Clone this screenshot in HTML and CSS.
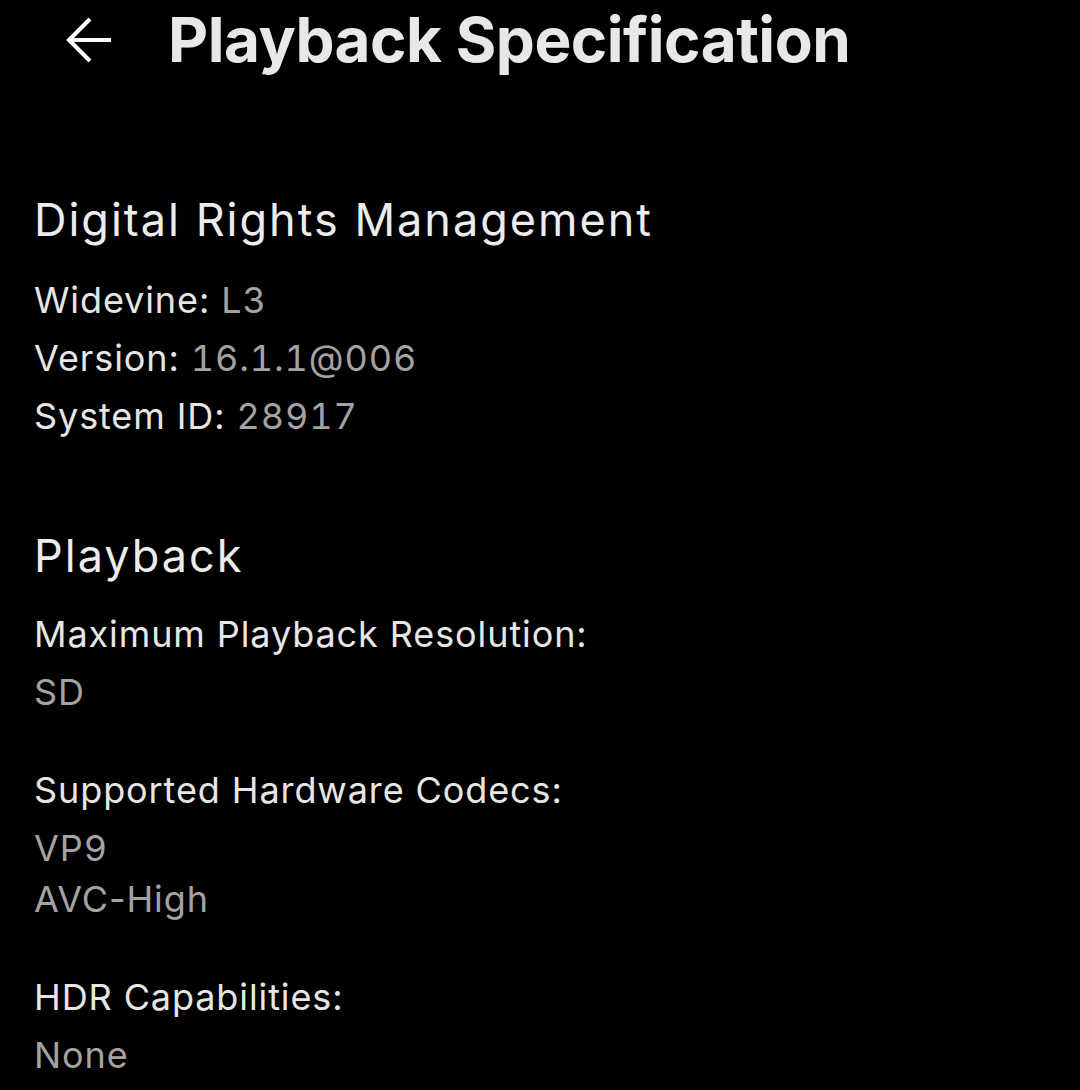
FILE: index.html
```html
<!DOCTYPE html>
<html>
<head>
<meta charset="utf-8">
<link rel="stylesheet" href="styles.css">
</head>
<body>
<header class="topbar">
  <svg class="back" width="48" height="48" viewBox="0 0 48 48" aria-hidden="true">
    <path d="M45 24H4M24 3L3 24L24 45" fill="none" stroke="#fff" stroke-width="4" stroke-linecap="butt" stroke-linejoin="miter"/>
  </svg>
  <h1 class="title">Playback Specification</h1>
</header>
<main class="content">
  <section class="section">
    <h2 class="heading">Digital Rights Management</h2>
    <div class="rows">
      <p class="row"><span class="label">Widevine:</span> <span class="value num">L3</span></p>
      <p class="row"><span class="label">Version:</span> <span class="value num">16.1.1@006</span></p>
      <p class="row"><span class="label">System ID:</span> <span class="value num">28917</span></p>
    </div>
  </section>
  <section class="section">
    <h2 class="heading">Playback</h2>
    <div class="groups">
      <div class="group">
        <p class="label block">Maximum Playback Resolution:</p>
        <div class="values">
          <p class="value block">SD</p>
        </div>
      </div>
      <div class="group">
        <p class="label block">Supported Hardware Codecs:</p>
        <div class="values">
          <p class="value block num">VP9</p>
          <p class="value block">AVC-High</p>
        </div>
      </div>
      <div class="group">
        <p class="label block">HDR Capabilities:</p>
        <div class="values">
          <p class="value block">None</p>
        </div>
      </div>
    </div>
  </section>
</main>
</body>
</html>
```
FILE: styles.css
```css
html, body {
  margin: 0;
  padding: 0;
  background: #000;
}
body {
  font-family: Inter, "Noto Sans", sans-serif;
  color: #e6e6e6;
  width: 1080px;
  height: 1090px;
  overflow: hidden;
}
p, h1, h2 { margin: 0; }
.topbar {
  display: flex;
  align-items: center;
  height: 80px;
  padding-left: 66px;
}
.back {
  flex: none;
  width: 48px;
  height: 48px;
}
.title {
  margin-left: 54px;
  font-size: 62px;
  font-weight: 700;
  color: #e8e8e8;
  letter-spacing: -0.5px;
  line-height: 80px;
}
.content {
  padding: 112px 34px 0 34px;
}
.section + .section {
  margin-top: 83px;
}
.heading {
  font-size: 45px;
  font-weight: 400;
  color: #ececec;
  letter-spacing: 2px;
  line-height: 56px;
}
.rows {
  margin-top: 23px;
}
.row,
.label.block,
.value.block {
  font-size: 36px;
  letter-spacing: 0.9px;
}
.row {
  line-height: 58px;
}
.label { color: #e6e6e6; }
.value {
  color: #a3a3a3;
}
.num {
  font-variant-numeric: tabular-nums;
}
.groups {
  margin-top: 21px;
  display: flex;
  flex-direction: column;
  gap: 43px;
}
.label.block {
  line-height: 58px;
}
.values {
  margin-top: 4px;
}
.value.block {
  line-height: 51px;
}
```
